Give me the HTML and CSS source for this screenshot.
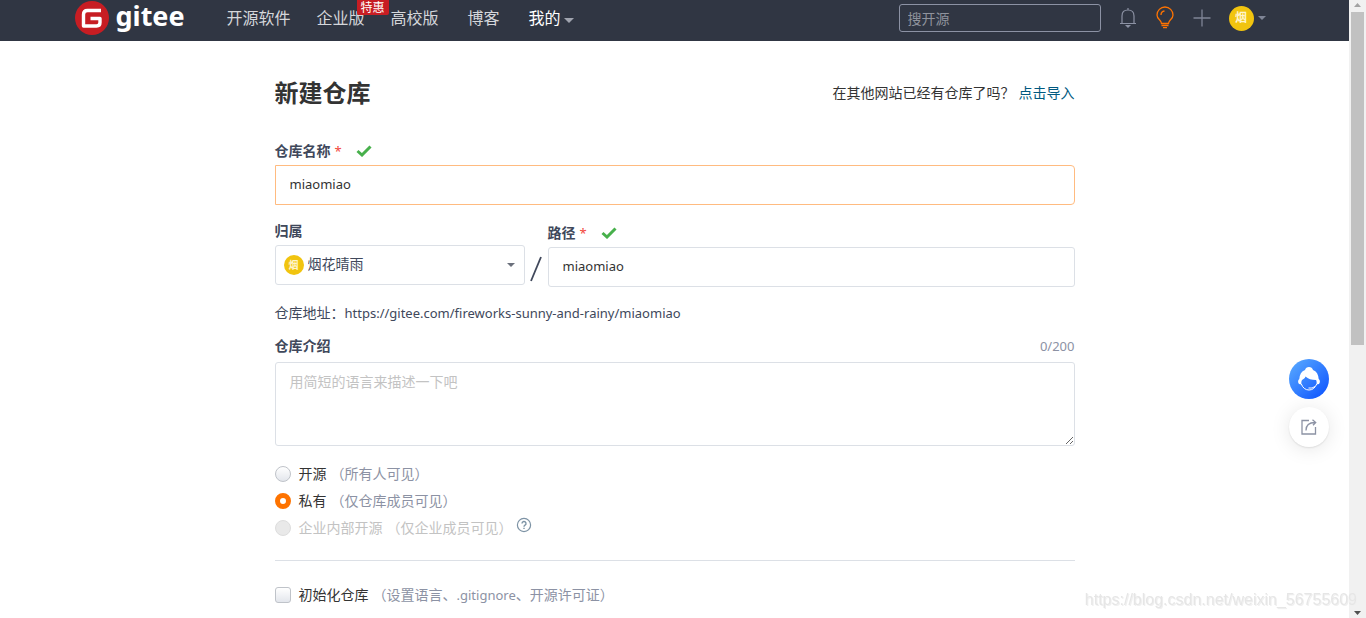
FILE: index.html
```html
<!DOCTYPE html>
<html lang="zh-CN">
<head>
<meta charset="utf-8">
<meta name="viewport" content="width=device-width, initial-scale=1">
<title>新建仓库 - Gitee</title>
<link rel="stylesheet" href="styles.css">
</head>
<body>
<div class="page">
  <div class="view">
    <header class="topbar">
      <div class="topbar-inner">
        <a class="brand" href="#">
          <svg class="brand-mark" viewBox="0 0 34 34" aria-hidden="true">
            <circle cx="17" cy="17" r="17" fill="#c71d23"/>
            <path d="M26 9.500H12.500Q8.500 9.500 8.500 13.500V25H21.500Q25 25 25 21.500V17.500H15.500" fill="none" stroke="#fff" stroke-width="3.400" stroke-linejoin="round"/>
          </svg>
          <span class="brand-name">gitee</span>
        </a>
        <nav class="nav">
          <a class="nav-link" href="#">开源软件</a>
          <a class="nav-link" href="#">企业版<span class="nav-badge">特惠</span></a>
          <a class="nav-link" href="#">高校版</a>
          <a class="nav-link nav-link-wide" href="#">博客</a>
          <a class="nav-link nav-link-wide nav-link-mine" href="#">我的<svg class="caret" viewBox="0 0 10 5" aria-hidden="true"><path d="M0 0h10L5 5z" fill="#a0a4af"/></svg></a>
        </nav>
        <div class="tools">
          <input class="search" type="search" placeholder="搜开源" aria-label="搜开源">
          <button class="tool" type="button" aria-label="通知">
            <svg width="18" height="22" viewBox="0 0 18 22" fill="none" stroke="#8c92a4" stroke-width="1.200"><path d="M1 16.500h16M3 16.500V9Q3 3 9 3t6 6v7.500M9 3V1"/><path d="M6 18h6L9 21z" fill="#8c92a4" stroke="none"/></svg>
          </button>
          <button class="tool" type="button" aria-label="提示">
            <svg width="20" height="24" viewBox="0 0 20 24" fill="none" stroke="#fe7300" stroke-width="1.300"><path d="M6.500 17.500C6.500 14 2 13.500 2 9a8 8 0 0 1 16 0c0 4.500-4.500 5-4.500 8.500zM6 9q0-3.500 3.500-4M6.500 19.500h7M8 21.700h4"/></svg>
          </button>
          <button class="tool" type="button" aria-label="新建">
            <svg width="18" height="18" viewBox="0 0 18 18" stroke="#7f8596" stroke-width="1.300"><path d="M.5 9h17M9 .5v17"/></svg>
          </button>
          <button class="account" type="button" aria-label="烟花晴雨"><span class="avatar">烟</span><svg class="caret-small" viewBox="0 0 8 4" aria-hidden="true"><path d="M0 0h8L4 4z" fill="#7f8596"/></svg></button>
        </div>
      </div>
    </header>

    <main class="content">
      <div class="heading">
        <h1 class="title">新建仓库</h1>
        <p class="import">在其他网站已经有仓库了吗？<a href="#">点击导入</a></p>
      </div>
      <form class="form">
        <div class="field">
          <label class="label" for="name">仓库名称<span class="required">*</span><svg class="check" viewBox="0 0 16 12" aria-hidden="true"><path d="M1.500 6l4.500 4 8.500-8.500" fill="none" stroke="#47b04b" stroke-width="3"/></svg></label>
          <input class="input input-active" id="name" type="text" value="miaomiao">
        </div>
        <div class="row">
          <div class="field owner">
            <label class="label" for="owner">归属</label>
            <div class="select-box">
              <select class="select" id="owner"><option>烟花晴雨</option></select>
              <span class="avatar avatar-small">烟</span>
              <svg class="select-caret" viewBox="0 0 8 4" aria-hidden="true"><path d="M0 0h8L4 4z" fill="#6b707c"/></svg>
            </div>
          </div>
          <svg class="slash" viewBox="0 0 12 26" aria-hidden="true"><path d="M11 1L1 25" stroke="#40485b" stroke-width="1.800"/></svg>
          <div class="field path">
            <label class="label" for="path">路径<span class="required">*</span><svg class="check" viewBox="0 0 16 12" aria-hidden="true"><path d="M1.500 6l4.500 4 8.500-8.500" fill="none" stroke="#47b04b" stroke-width="3"/></svg></label>
            <input class="input" id="path" type="text" value="miaomiao">
          </div>
        </div>
        <p class="address">仓库地址：<span class="latin">https://gitee.com/fireworks-sunny-and-rainy/miaomiao</span></p>
        <div class="field intro">
          <div class="intro-head"><label class="label" for="intro">仓库介绍</label><span class="count latin">0/200</span></div>
          <textarea class="textarea" id="intro" placeholder="用简短的语言来描述一下吧"></textarea>
        </div>
        <div class="choices">
          <label class="choice"><input type="radio" name="scope"><span>开源</span><span class="note">（所有人可见）</span></label>
          <label class="choice"><input type="radio" name="scope" checked><span>私有</span><span class="note">（仅仓库成员可见）</span></label>
          <div class="choice-line">
            <label class="choice choice-disabled"><input type="radio" name="scope" disabled><span>企业内部开源</span><span class="note">（仅企业成员可见）</span></label>
            <svg class="help" viewBox="0 0 16 16" fill="none" stroke="#7d93a5" stroke-width="1.200" aria-hidden="true"><circle cx="8" cy="8" r="6.600"/><path d="M6 6.500a2 2 0 1 1 3 1.700Q8 8.800 8 9.700M8 10.700v1.300" stroke-width="1.400"/></svg>
          </div>
        </div>
        <hr class="divider">
        <label class="choice"><input type="checkbox"><span>初始化仓库</span><span class="note">（设置语言、<span class="latin">.gitignore</span>、开源许可证）</span></label>
      </form>
    </main>
  </div>
  <div class="scrollbar" aria-hidden="true">
    <svg class="arrow" viewBox="0 0 7 4"><path d="M0 4h7L3.500 0z" fill="#a3a3a3"/></svg>
    <div class="track"><div class="thumb"></div></div>
    <svg class="arrow" viewBox="0 0 7 4"><path d="M0 0h7L3.500 4z" fill="#505050"/></svg>
  </div>
</div>

<div class="floating">
  <button class="float float-service" type="button" aria-label="客服">
    <svg width="40" height="40" viewBox="0 0 40 40"><path d="M10 25c-1.300-1.500-1.200-4 .3-5 .2-4.500 2.200-7.700 5.700-9C16.500 9 18 8 20 8s3.500 1 4 3c3.500 1.300 5.500 4.500 5.700 9 1.500 1 1.600 3.500.3 5l-2.500.5c.3-2 .2-3.500-.5-4.500-4.500 0-8-1-10.500-3.500-.5 1.700-1.800 2.700-3.500 3.500-.7 1.500-.8 2.500-.5 4.500z" fill="#fff"/><path d="M12.300 25c1.500 4 4.200 6 7.700 6s6.200-2 7.700-6M19.500 29h3.500l3-1.500" fill="none" stroke="#fff" stroke-width="1"/></svg>
  </button>
  <button class="float float-share" type="button" aria-label="反馈">
    <svg width="16" height="16" viewBox="0 0 16 16" fill="none" stroke="#8c92a4" stroke-width="1.300"><path d="M8 1.500H1V15h13.500V8M5 11.500C5 6.500 8 3.500 14 3.500M11.500 .8L14.700 3.500 12 6.300"/></svg>
  </button>
</div>
<div class="watermark">https://blog.csdn.net/weixin_56755609</div>
</body>
</html>
```

FILE: styles.css
```css
* { box-sizing: border-box; }

body {
  margin: 0;
  background: #fff;
  color: #40485b;
  font: 14px/20px "Noto Sans", "Noto Sans CJK SC", sans-serif;
}

a { color: inherit; text-decoration: none; }
p, h1 { margin: 0; }
svg { flex: none; }

button {
  padding: 0;
  border: 0;
  background: none;
  font: inherit;
  cursor: pointer;
}

.page { display: flex; min-height: 100vh; }
.view { flex: 1; min-width: 0; }
.latin { font-size: 13px; }

/* Top bar */
.topbar { background: #303643; }

.topbar-inner {
  display: flex;
  align-items: center;
  max-width: 1200px;
  height: 41px;
  margin: 0 auto;
  padding-bottom: 5px;
}

.brand { display: flex; align-items: center; gap: 7px; width: 152px; }
.brand-mark { width: 34px; height: 34px; }

.brand-name {
  padding-bottom: 4px;
  color: #fff;
  font: bold 27px/32px "Noto Sans", sans-serif;
}

.nav { display: flex; gap: 26px; }

.nav-link {
  position: relative;
  display: flex;
  align-items: center;
  color: #d5d7db;
  font-size: 16px;
  line-height: 24px;
  white-space: nowrap;
}

.nav-link-wide { margin-left: 3px; }
.nav-link-mine { color: #fff; }

.nav-badge {
  position: absolute;
  top: -6px;
  right: -24px;
  padding: 0 4px;
  border-radius: 0 0 2px 2px;
  background: #c71d23;
  color: #fff;
  font-size: 12px;
  line-height: 15px;
}

.caret { width: 10px; height: 5px; margin: 4px 0 0 3px; }

.tools {
  display: flex;
  align-items: center;
  gap: 18px;
  margin-left: auto;
  padding-right: 9px;
}

.search {
  width: 202px;
  height: 28px;
  padding: 0 8px;
  border: 1px solid #8c92a4;
  border-radius: 3px;
  outline: 0;
  background: transparent;
  color: #fff;
  font: inherit;
}

.search::placeholder { color: #8f939c; }
.tool { display: flex; }

.account { display: flex; align-items: center; gap: 4px; }

.avatar {
  display: flex;
  align-items: center;
  justify-content: center;
  width: 25px;
  height: 25px;
  border-radius: 50%;
  background: #f1c40f;
  color: #fff5cc;
  font-size: 12px;
  font-weight: bold;
}

.caret-small { width: 8px; height: 4px; }

/* Form page */
.content { max-width: 800px; margin: 0 auto; padding-top: 36px; }

.heading {
  display: flex;
  align-items: center;
  justify-content: space-between;
  margin-bottom: 32px;
}

.title { color: #333; font-size: 24px; line-height: 32px; }
.import { display: flex; gap: 4px; color: #333; }
.import a { color: #005980; }

.field { display: flex; flex-direction: column; gap: 4px; }
.label { display: flex; align-items: center; font-weight: bold; }
.required { margin-left: 4px; color: #f2453d; font-size: 13px; font-weight: normal; }
.check { width: 16px; height: 12px; margin-left: 14px; }

.input,
.select,
.textarea {
  width: 100%;
  border: 1px solid #dce0e6;
  border-radius: 3px;
  outline: 0;
  background: #fff;
  color: #333;
  font: inherit;
}

.input { height: 40px; padding: 0 14px 2px; font-size: 13px; }
.input-active { border-color: #ffbb80; border-radius: 0 4px 4px 0; }

.row { display: flex; align-items: flex-start; margin-top: 16px; }
.owner { width: 250px; }
.slash { width: 12px; height: 26px; margin: 35px 6px 0 5px; }
.path { flex: 1; padding-top: 2px; }

.select-box { position: relative; }
.select { height: 40px; padding: 0 32px 2px; appearance: none; color: #40485b; }
.avatar-small { position: absolute; top: 10px; left: 9px; width: 20px; height: 20px; font-size: 10px; }
.select-caret { position: absolute; top: 18px; right: 10px; width: 8px; height: 4px; }

.address { margin: 16px 0 13px; }
.intro { gap: 6px; }
.intro-head { display: flex; justify-content: space-between; }
.count { color: #8c92a4; }

.textarea {
  display: block;
  height: 84px;
  padding: 9px 14px;
  resize: vertical;
}

.textarea::placeholder { color: #c3c3c3; }

.choices { margin-top: 14px; }
.choice-line { display: flex; }

.choice {
  display: flex;
  align-items: center;
  height: 27px;
  color: #333;
}

.choice input {
  width: 16px;
  height: 16px;
  margin: 0 8px 0 0;
  border: 1px solid #bfc3c9;
  appearance: none;
  background: linear-gradient(#fff, #e3e6ec);
}

.choice input[type="radio"] { border-radius: 50%; }
.choice input[type="checkbox"] { border-radius: 3px; }
.choice input:checked { border: 5px solid #fe7300; background: #fff; }
.choice input:disabled { border-color: #ddd; background: #e9e9e9; }

.note { margin-left: 4px; color: #8c92a4; }
.choice-disabled, .choice-disabled .note { color: #c3c3c3; }
.help { width: 16px; height: 16px; margin: 3px 0 0 3px; }

.divider {
  margin: 19px 0 20px;
  border: 0;
  border-top: 1px solid #dce0e6;
}

/* Scroll bar */
.scrollbar {
  display: flex;
  flex-direction: column;
  align-items: center;
  width: 17px;
  padding: 3px 0;
  background: #f1f1f1;
}

.arrow { width: 7px; height: 4px; }
.track { flex: 1; width: 13px; padding: 5px 0; }
.thumb { height: 56%; background: #c1c1c1; }

/* Floating buttons and watermark */
.floating {
  position: fixed;
  top: 359px;
  right: 37px;
  display: grid;
  gap: 8px;
}

.float {
  display: flex;
  align-items: center;
  justify-content: center;
  width: 40px;
  height: 40px;
  border-radius: 50%;
}

.float-service { background: linear-gradient(135deg, #5cadff, #0a50ff); }
.float-share { background: #fff; box-shadow: 0 1px 2px rgba(0, 0, 0, .1), 0 2px 20px rgba(0, 0, 0, .1); }

.watermark {
  position: fixed;
  right: 9px;
  bottom: 8px;
  color: #e6e6e6;
  font: 16px/20px "Liberation Sans", sans-serif;
  text-shadow: 1px 1px 0 #f0f0f0;
  pointer-events: none;
}
```
